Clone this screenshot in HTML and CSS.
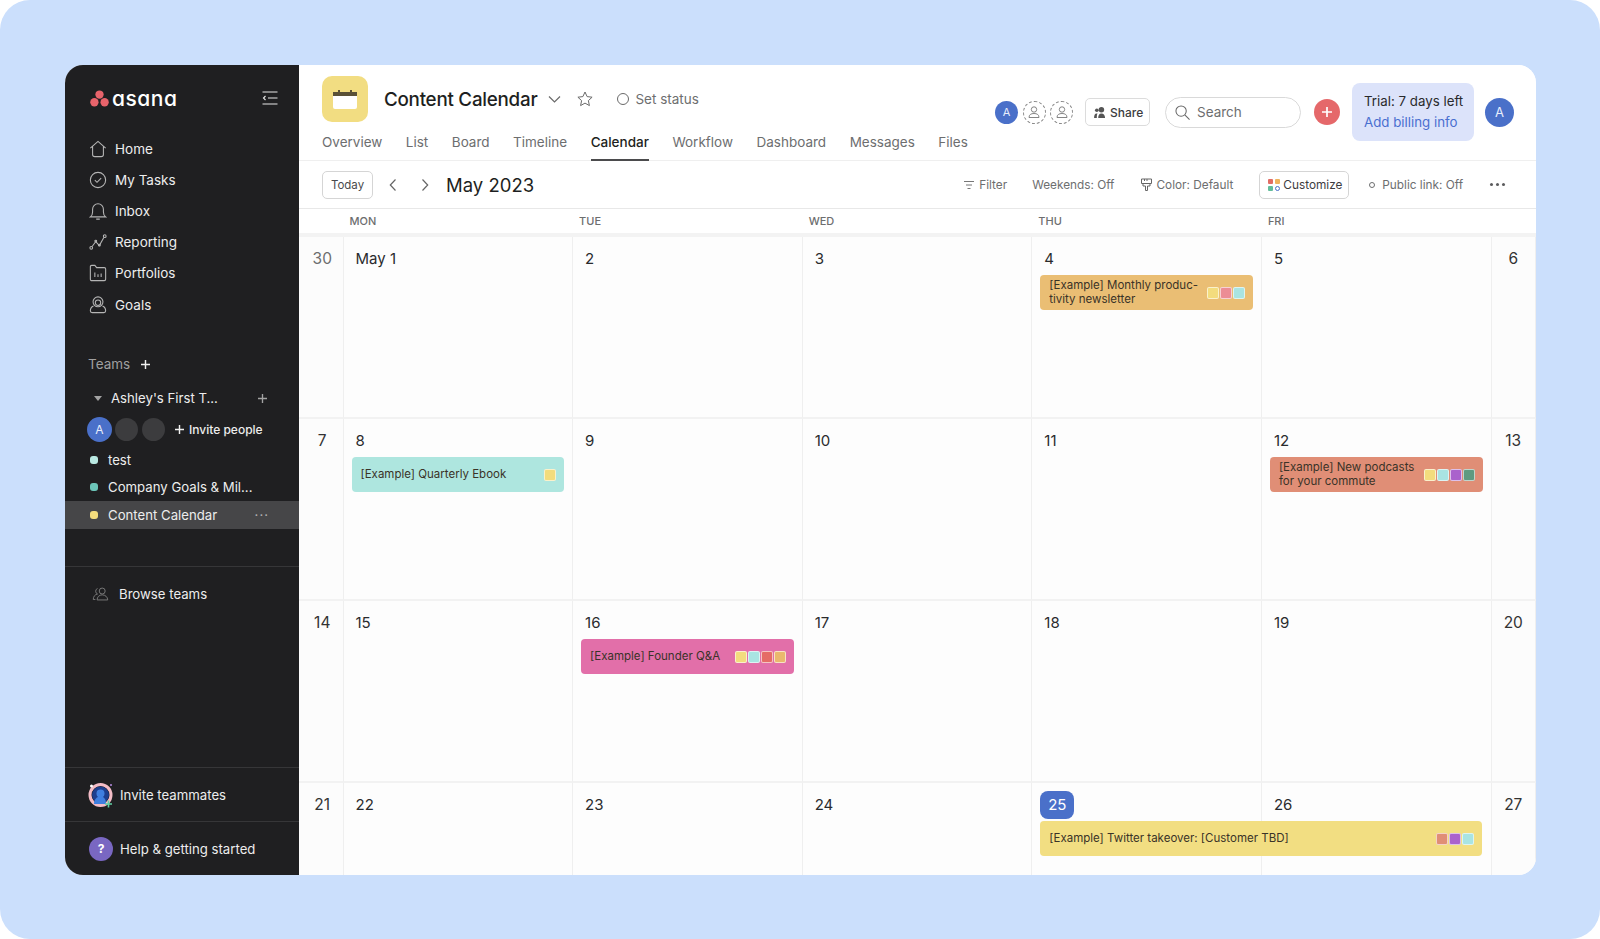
FILE: index.html
```html
<!DOCTYPE html>
<html lang="en">
<head>
    <meta charset="UTF-8">
    <meta name="viewport" content="width=device-width, initial-scale=1.0">
    <title>Content Calendar</title>
    <link rel="stylesheet" href="styles.css">
</head>
<body>
    <div class="backdrop">
        <div class="app">
            <aside class="sidebar">
                <div class="brand">
                    <div class="brand-name">
                        <svg class="brand-dots" viewBox="0 0 20 18"><circle cx="10" cy="4.800" r="4.400" fill="#e8636b"/><circle cx="4.600" cy="13" r="4.400" fill="#e8636b"/><circle cx="15.400" cy="13" r="4.400" fill="#e8636b"/></svg>
                        <span class="brand-text">asana</span>
                    </div>
                    <svg class="collapse" viewBox="0 0 16 14" fill="none" stroke="#e8e8e8" stroke-width="1.1"><path d="M0.5 1h15M6 7h9.5M0.5 13h15M3.5 5L1.5 7l2 2"/></svg>
                </div>

                <nav class="nav">
                    <a class="nav-item">
                        <svg class="nav-icon" viewBox="0 0 20 20" fill="none" stroke="#b5b5b5" stroke-width="1.2"><path d="M1.5 9L10 1.5 18.5 9M4 7v9a2.5 2.5 0 0 0 2.5 2.5h7A2.5 2.5 0 0 0 16 16V7"/></svg>
                        Home
                    </a>
                    <a class="nav-item">
                        <svg class="nav-icon" viewBox="0 0 20 20" fill="none" stroke="#b5b5b5" stroke-width="1.2"><circle cx="10" cy="10" r="8.5"/><path d="M6.5 10.2l2.4 2.4 4.6-4.8"/></svg>
                        My Tasks
                    </a>
                    <a class="nav-item">
                        <svg class="nav-icon" viewBox="0 0 20 20" fill="none" stroke="#b5b5b5" stroke-width="1.2"><path d="M1.5 16.5c2-1.500 2.500-3 2.500-5.500V8a6 6 0 0 1 12 0v3c0 2.500.5 4 2.500 5.500zM8 19h4"/></svg>
                        Inbox
                    </a>
                    <a class="nav-item">
                        <svg class="nav-icon" viewBox="0 0 20 20" fill="none" stroke="#b5b5b5" stroke-width="1.2"><circle cx="2.500" cy="16.500" r="1.500"/><circle cx="17.500" cy="3.500" r="1.500"/><path d="M3.500 15L7.500 9.500 11.500 14 16.500 5"/><circle cx="7.500" cy="9" r="1"/><circle cx="11.500" cy="13.500" r="1"/></svg>
                        Reporting
                    </a>
                    <a class="nav-item">
                        <svg class="nav-icon" viewBox="0 0 20 20" fill="none" stroke="#b5b5b5" stroke-width="1.2"><path d="M2.500 18.500a1.500 1.500 0 0 1-1-1.500V3a1.500 1.500 0 0 1 1.500-1.500h3.500l2 2.500H17a1.500 1.500 0 0 1 1.500 1.500V17a1.500 1.500 0 0 1-1.500 1.500z"/><path d="M6.500 14.500v-5M10 14.500v-3M13.500 14.500v-4"/></svg>
                        Portfolios
                    </a>
                    <a class="nav-item">
                        <svg class="nav-icon" viewBox="0 0 20 20" fill="none" stroke="#b5b5b5" stroke-width="1.2"><circle cx="10" cy="6.500" r="5.500"/><circle cx="10" cy="7.500" r="3"/><path d="M5 11c-2.500 1-3.500 3-3.500 5.500 0 1.200.8 2 2 2h13c1.200 0 2-.8 2-2 0-2.500-1-4.500-3.500-5.500"/></svg>
                        Goals
                    </a>
                </nav>

                <div class="teams-head">
                    <span>Teams</span>
                    <svg class="plus-icon" viewBox="0 0 10 10" stroke="#f0f0f0" stroke-width="1.6"><path d="M5 0v10M0 5h10"/></svg>
                </div>
                <div class="team-row">
                    <span class="caret"></span>
                    <span class="team-name">Ashley's First T...</span>
                    <svg class="team-add" viewBox="0 0 10 10" stroke="#a3a3a3" stroke-width="1.5"><path d="M5 0v10M0 5h10"/></svg>
                </div>
                <div class="member-row">
                    <span class="avatar avatar-sm">A</span>
                    <span class="ghost"></span>
                    <span class="ghost ghost-last"></span>
                    <svg class="invite-plus" viewBox="0 0 10 10" stroke="#f0f0f0" stroke-width="1.6"><path d="M5 0v10M0 5h10"/></svg>
                    <span class="invite-label">Invite people</span>
                </div>
                <ul class="projects">
                    <li class="project"><span class="dot dot-mint"></span>test</li>
                    <li class="project"><span class="dot dot-teal"></span>Company Goals &amp; Mil...</li>
                    <li class="project active"><span class="dot dot-yellow"></span>Content Calendar<span class="more">···</span></li>
                </ul>

                <div class="browse">
                    <svg class="browse-icon" viewBox="0 0 20 16" fill="none" stroke="#7c7c7c" stroke-width="1.1"><circle cx="12" cy="4.500" r="3.500"/><path d="M6 15c0-3.500 2.500-6 6-6s6.500 2.500 6.500 6zM6.500 1.500a3.500 3.500 0 0 0 0 6.500C3.500 8.500 1.500 11 1.500 14.500H4"/></svg>
                    Browse teams
                </div>

                <div class="sidebar-foot">
                    <div class="foot-row">
                        <svg class="foot-icon" viewBox="0 0 26 26"><circle cx="12.500" cy="13" r="10.500" fill="none" stroke="#f3bcc6" stroke-width="3"/><circle cx="12.500" cy="13" r="8.500" fill="#1d3f8f"/><path d="M6 22c0-5 3-7.500 6.500-7.500S18 17 18 22z" fill="#3f7fe0"/><circle cx="12.500" cy="11.500" r="4" fill="#3f7fe0"/><circle cx="3.500" cy="4" r="1.500" fill="#fff"/><circle cx="23" cy="3" r="1" fill="#b58be0"/><path d="M20.500 18.500v7M17 22h7" stroke="#5fd0a4" stroke-width="1.600"/></svg>
                        Invite teammates
                    </div>
                    <div class="foot-row">
                        <span class="help-badge">?</span>
                        Help &amp; getting started
                    </div>
                </div>
            </aside>

            <main class="main">
                <header class="header">
                    <div class="project-icon">
                        <svg viewBox="0 0 24 20" width="24" height="20"><rect x="0" y="3" width="24" height="17" rx="2" fill="#fff"/><rect x="0" y="3" width="24" height="4" fill="#5a5137"/><rect x="5" y="1" width="2" height="4" fill="#5a5137"/><rect x="17" y="1" width="2" height="4" fill="#5a5137"/></svg>
                    </div>
                    <div class="header-left">
                        <div class="title-row">
                            <h1 class="title">Content Calendar</h1>
                            <svg class="title-caret" viewBox="0 0 12 7" fill="none" stroke="#6a6a6a" stroke-width="1.2"><path d="M0.500 0.500L6 6l5.500-5.500"/></svg>
                            <svg class="star" viewBox="0 0 16 16" fill="none" stroke="#6a6a6a" stroke-width="1"><path d="M8 1l2.100 4.600 5 .6-3.700 3.400 1 5L8 12.100 3.600 14.600l1-5L.9 6.200l5-.6z"/></svg>
                            <span class="status-ring"></span>
                            <span class="status">Set status</span>
                        </div>
                        <nav class="tabs">
                            <a class="tab">Overview</a>
                            <a class="tab">List</a>
                            <a class="tab">Board</a>
                            <a class="tab">Timeline</a>
                            <a class="tab tab-active">Calendar</a>
                            <a class="tab">Workflow</a>
                            <a class="tab">Dashboard</a>
                            <a class="tab">Messages</a>
                            <a class="tab">Files</a>
                        </nav>
                    </div>
                    <div class="header-right">
                        <div class="members">
                            <span class="avatar avatar-xs">A</span>
                            <span class="dashed">
                                <svg viewBox="0 0 12 12" fill="none" stroke="#777" stroke-width=".9"><circle cx="6" cy="3.500" r="2.700"/><path d="M1 11.500c0-2.800 2-4 5-4s5 1.200 5 4z"/></svg>
                            </span>
                            <span class="dashed">
                                <svg viewBox="0 0 12 12" fill="none" stroke="#777" stroke-width=".9"><circle cx="6" cy="3.500" r="2.700"/><path d="M1 11.500c0-2.800 2-4 5-4s5 1.200 5 4z"/></svg>
                            </span>
                        </div>
                        <button class="share">
                            <svg viewBox="0 0 14 12" width="13" height="11" fill="#555"><circle cx="8" cy="3" r="3"/><circle cx="3" cy="3.500" r="2"/><path d="M4.500 12c0-3 1-5 3.500-5s4 2 4 5zM0 12c0-3 .6-5 3-5 .4 0 .5 0 .7.100C3 8.500 3 10 3 12z"/></svg>
                            Share
                        </button>
                        <div class="search">
                            <svg viewBox="0 0 16 16" width="15" height="15" fill="none" stroke="#666" stroke-width="1.100"><circle cx="6.500" cy="6.500" r="5.500"/><path d="M10.500 10.500l5 5"/></svg>
                            Search
                        </div>
                        <span class="add-btn"><svg viewBox="0 0 10 10" width="10" height="10" stroke="#fff" stroke-width="1.700"><path d="M5 0v10M0 5h10"/></svg></span>
                        <div class="trial">
                            <div class="trial-days">Trial: 7 days left</div>
                            <div class="trial-link">Add billing info</div>
                        </div>
                        <span class="avatar avatar-lg">A</span>
                    </div>
                </header>

                <div class="toolbar">
                    <button class="btn-today">Today</button>
                    <svg class="arrow arrow-prev" viewBox="0 0 7 12" fill="none" stroke="#666" stroke-width="1.200"><path d="M6 .5L.8 6 6 11.500"/></svg>
                    <svg class="arrow arrow-next" viewBox="0 0 7 12" fill="none" stroke="#666" stroke-width="1.200"><path d="M1 .5L6.200 6 1 11.500"/></svg>
                    <span class="month">May 2023</span>
                    <div class="tools">
                        <span class="tool tool-filter">
                            <svg viewBox="0 0 10 8" width="10" height="8" stroke="#777" fill="none"><path d="M0 .5h10M2 4h6M3.500 7.500h3"/></svg>
                            Filter
                        </span>
                        <span class="tool tool-weekends">Weekends: Off</span>
                        <span class="tool tool-color">
                            <svg viewBox="0 0 11 13" width="11" height="13" stroke="#666" fill="none"><path d="M.5 1h10v4.500H.5zM2 5.500v2.500h2.500v4.500h2V8H9V5.500M3.500 1v2M6 1v2"/></svg>
                            Color: Default
                        </span>
                        <button class="customize">
                            <span class="swatches"><i class="sw sw-red"></i><i class="sw sw-orange"></i><i class="sw sw-green"></i><i class="sw sw-blue"></i></span>
                            Customize
                        </button>
                        <span class="tool tool-link"><span class="link-ring"></span>Public link: Off</span>
                        <span class="tool-more"><i></i><i></i><i></i></span>
                    </div>
                </div>

                <div class="weekdays">
                    <span></span>
                    <span class="weekday">MON</span>
                    <span class="weekday">TUE</span>
                    <span class="weekday">WED</span>
                    <span class="weekday">THU</span>
                    <span class="weekday">FRI</span>
                    <span></span>
                </div>

                <div class="calendar">
                    <div class="cell side sunday"><span class="date past">30</span></div>
                    <div class="cell"><span class="date">May 1</span></div>
                    <div class="cell"><span class="date">2</span></div>
                    <div class="cell"><span class="date">3</span></div>
                    <div class="cell">
                        <span class="date">4</span>
                        <div class="event event-orange">
                            <span class="event-text">[Example] Monthly produc-<br>tivity newsletter</span>
                            <span class="chips"><i class="chip c-yellow"></i><i class="chip c-rose"></i><i class="chip c-aqua"></i></span>
                        </div>
                    </div>
                    <div class="cell"><span class="date">5</span></div>
                    <div class="cell side"><span class="date">6</span></div>

                    <div class="cell side sunday"><span class="date">7</span></div>
                    <div class="cell">
                        <span class="date">8</span>
                        <div class="event event-teal">
                            <span class="event-text">[Example] Quarterly Ebook</span>
                            <span class="chips"><i class="chip c-yellow"></i></span>
                        </div>
                    </div>
                    <div class="cell"><span class="date">9</span></div>
                    <div class="cell"><span class="date">10</span></div>
                    <div class="cell"><span class="date">11</span></div>
                    <div class="cell">
                        <span class="date">12</span>
                        <div class="event event-salmon">
                            <span class="event-text">[Example] New podcasts<br>for your commute</span>
                            <span class="chips"><i class="chip c-yellow"></i><i class="chip c-aqua"></i><i class="chip c-purple"></i><i class="chip c-green"></i></span>
                        </div>
                    </div>
                    <div class="cell side"><span class="date">13</span></div>

                    <div class="cell side sunday"><span class="date">14</span></div>
                    <div class="cell"><span class="date">15</span></div>
                    <div class="cell">
                        <span class="date">16</span>
                        <div class="event event-pink">
                            <span class="event-text">[Example] Founder Q&amp;A</span>
                            <span class="chips"><i class="chip c-yellow"></i><i class="chip c-aqua"></i><i class="chip c-red"></i><i class="chip c-amber"></i></span>
                        </div>
                    </div>
                    <div class="cell"><span class="date">17</span></div>
                    <div class="cell"><span class="date">18</span></div>
                    <div class="cell"><span class="date">19</span></div>
                    <div class="cell side"><span class="date">20</span></div>

                    <div class="cell side sunday"><span class="date">21</span></div>
                    <div class="cell"><span class="date">22</span></div>
                    <div class="cell"><span class="date">23</span></div>
                    <div class="cell"><span class="date">24</span></div>
                    <div class="cell cell-span">
                        <span class="date today">25</span>
                        <div class="event event-yellow event-wide">
                            <span class="event-text">[Example] Twitter takeover: [Customer TBD]</span>
                            <span class="chips"><i class="chip c-salmon"></i><i class="chip c-purple"></i><i class="chip c-aqua"></i></span>
                        </div>
                    </div>
                    <div class="cell"><span class="date">26</span></div>
                    <div class="cell side"><span class="date">27</span></div>
                </div>
            </main>
        </div>
    </div>
</body>
</html>
```

FILE: styles.css
```css
* {
    box-sizing: border-box;
}
html, body {
    height: 100%;
}
body {
    margin: 0;
    background: #fff;
    font-family: Inter, 'Liberation Sans', sans-serif;
    overflow: hidden;
}
button {
    font-family: inherit;
    cursor: pointer;
}
i {
    display: block;
}
.backdrop {
    height: 939px;
    padding: 65px 64px 64px 65px;
    background: #cbdffc;
    border-radius: 30px;
}
.app {
    display: flex;
    height: 810px;
    border-radius: 18px;
    overflow: hidden;
    background: #fdfdfd;
}

/* sidebar */
.sidebar {
    display: flex;
    flex-direction: column;
    flex: 0 0 234px;
    background: #1f1f21;
    color: #ededed;
    font-size: 13.5px;
}
.brand {
    display: flex;
    align-items: center;
    justify-content: space-between;
    height: 34px;
    margin-top: 16px;
    padding: 0 21px 0 25px;
}
.brand-name {
    display: flex;
    align-items: center;
    gap: 3px;
}
.brand-dots {
    width: 19px;
    height: 17px;
}
.brand-text {
    font-size: 21px;
    font-weight: 500;
    color: #fff;
    font-feature-settings: 'cv11';
    letter-spacing: .5px;
}
.collapse {
    width: 16px;
    height: 14px;
}
.nav {
    display: flex;
    flex-direction: column;
    margin-top: 18px;
}
.nav-item {
    display: flex;
    align-items: center;
    gap: 8px;
    height: 31.2px;
    padding-left: 24px;
}
.nav-icon {
    width: 18px;
    height: 18px;
}
.teams-head {
    display: flex;
    align-items: center;
    gap: 11px;
    margin-top: 32px;
    height: 24px;
    padding-left: 23px;
    color: #a0a0a0;
}
.plus-icon {
    width: 9px;
    height: 9px;
}
.team-row {
    display: flex;
    align-items: center;
    height: 28px;
    margin-top: 8px;
    padding-left: 29px;
    font-size: 13.2px;
}
.caret {
    width: 0;
    height: 0;
    border-left: 4.5px solid transparent;
    border-right: 4.5px solid transparent;
    border-top: 5px solid #a3a3a3;
}
.team-name {
    margin-left: 9px;
    flex: 1;
}
.team-add {
    width: 9px;
    height: 9px;
    margin-right: 32px;
}
.avatar {
    display: flex;
    align-items: center;
    justify-content: center;
    border-radius: 50%;
    background: #4a70c9;
    color: #e8eefc;
    flex: none;
}
.member-row {
    display: flex;
    align-items: center;
    height: 33px;
    margin-top: 1px;
    padding-left: 22px;
}
.avatar-sm {
    width: 25px;
    height: 25px;
    font-size: 12px;
}
.ghost {
    width: 23px;
    height: 23px;
    margin-left: 3px;
    border-radius: 50%;
    background: #3c3c3e;
}
.ghost-last {
    margin-left: 4px;
}
.invite-plus {
    width: 9px;
    height: 9px;
    margin-left: 10px;
}
.invite-label {
    margin-left: 5px;
    font-size: 12px;
    font-weight: 500;
}
.projects {
    list-style: none;
    margin: 0;
    padding: 0;
}
.project {
    display: flex;
    align-items: center;
    height: 27.5px;
    padding-left: 25px;
    font-size: 13.2px;
}
.project.active {
    background: #464648;
}
.dot {
    width: 8px;
    height: 8px;
    margin-right: 10px;
    border-radius: 3px;
}
.dot-mint {
    background: #b9e9e2;
}
.dot-teal {
    background: #6cc5b9;
}
.dot-yellow {
    background: #f3dc7d;
}
.more {
    margin-left: auto;
    margin-right: 30px;
    color: #b0b0b0;
    letter-spacing: 1px;
}
.browse {
    display: flex;
    align-items: center;
    gap: 10px;
    margin-top: 37px;
    height: 56px;
    padding-left: 27px;
    border-top: 1px solid #363638;
    font-size: 13.2px;
}
.browse-icon {
    width: 17px;
    height: 14px;
}
.sidebar-foot {
    margin-top: auto;
}
.foot-row {
    display: flex;
    align-items: center;
    gap: 6px;
    height: 54px;
    padding-left: 23px;
    border-top: 1px solid #363638;
    font-size: 13.2px;
}
.foot-icon {
    width: 26px;
    height: 26px;
}
.help-badge {
    display: flex;
    align-items: center;
    justify-content: center;
    width: 24px;
    height: 24px;
    margin: 0 1px;
    border-radius: 50%;
    background: #7967c2;
    color: #fff;
    font-size: 12px;
    font-weight: 700;
}

/* header */
.main {
    flex: 1;
    display: flex;
    flex-direction: column;
    min-width: 0;
}
.header {
    position: relative;
    display: flex;
    height: 96px;
    padding: 11px 22px 0 23px;
    background: #fff;
    border-bottom: 1px solid #efefef;
}
.project-icon {
    display: flex;
    align-items: center;
    justify-content: center;
    flex: none;
    width: 46px;
    height: 46px;
    border-radius: 10px;
    background: #f2dd82;
}
.header-left {
    margin-left: -46px;
    flex: none;
}
.title-row {
    display: flex;
    align-items: center;
    height: 46px;
    padding-left: 62px;
}
.title {
    margin: 0;
    font-size: 18.8px;
    font-weight: 500;
    color: #1e1f21;
    letter-spacing: -.25px;
}
.title-caret {
    width: 13px;
    height: 7px;
    margin-left: 11px;
}
.star {
    width: 16px;
    height: 16px;
    margin-left: 16px;
}
.status-ring {
    width: 12px;
    height: 12px;
    margin-left: 24px;
    border: 1px solid #6a6a6a;
    border-radius: 50%;
}
.status {
    margin-left: 6px;
    font-size: 13.5px;
    color: #6d6e6f;
}
.tabs {
    display: flex;
    gap: 23.5px;
    margin-top: 6px;
}
.tab {
    height: 33px;
    padding-top: 6px;
    font-size: 13.5px;
    color: #6d6e6f;
}
.tab-active {
    color: #1e1f21;
    font-weight: 500;
    border-bottom: 2px solid #4b4b4d;
}
.header-right {
    display: flex;
    align-items: center;
    margin-left: auto;
    height: 58px;
    margin-top: 7px;
}
.members {
    display: flex;
    gap: 4.5px;
}
.avatar-xs {
    width: 23px;
    height: 23px;
    font-size: 11px;
}
.dashed {
    display: flex;
    align-items: center;
    justify-content: center;
    width: 23px;
    height: 23px;
    border: 1px dashed #8a8a8a;
    border-radius: 50%;
}
.dashed svg {
    width: 12px;
    height: 12px;
}
.share {
    display: flex;
    align-items: center;
    gap: 3px;
    width: 65px;
    height: 28px;
    margin-left: 12px;
    padding: 0 0 0 8px;
    background: #fff;
    border: 1px solid #dcdcdc;
    border-radius: 5px;
    font-size: 12px;
    font-weight: 500;
    color: #3c3c3e;
}
.search {
    display: flex;
    align-items: center;
    gap: 7px;
    width: 136px;
    height: 31px;
    margin-left: 15px;
    padding-left: 9px;
    border: 1px solid #d9d9d9;
    border-radius: 16px;
    font-size: 13.5px;
    color: #6d6e6f;
}
.add-btn {
    display: flex;
    align-items: center;
    justify-content: center;
    width: 26px;
    height: 26px;
    margin-left: 13px;
    border-radius: 50%;
    background: #e5686a;
}
.trial {
    width: 122px;
    height: 58px;
    margin-left: 12px;
    padding: 8px 0 0 12px;
    background: #dce3fa;
    border-radius: 8px;
    font-size: 13.3px;
    line-height: 21px;
}
.trial-days {
    color: #2a2a2c;
}
.trial-link {
    color: #4a6fd0;
}
.avatar-lg {
    width: 29px;
    height: 29px;
    margin-left: 11px;
    font-size: 13px;
}

/* toolbar */
.toolbar {
    display: flex;
    align-items: center;
    flex: none;
    height: 48px;
    padding: 0 31px 0 23px;
    background: #fff;
    border-bottom: 1px solid #e8e8e8;
}
.btn-today {
    width: 51px;
    height: 28px;
    padding: 0;
    background: #fff;
    border: 1px solid #d5d5d5;
    border-radius: 5px;
    font-size: 11.5px;
    color: #4a4a4c;
}
.arrow {
    width: 8px;
    height: 12px;
}
.arrow-prev {
    margin-left: 16px;
}
.arrow-next {
    margin-left: 24px;
}
.month {
    margin-left: 17px;
    font-size: 18.5px;
    color: #1e1f21;
}
.tools {
    display: flex;
    align-items: center;
    margin-left: auto;
}
.tool {
    display: flex;
    align-items: center;
    gap: 4px;
    font-size: 11.8px;
    color: #6d6e6f;
}
.tool-filter {
    gap: 5px;
}
.tool-weekends {
    margin-left: 25px;
}
.tool-color {
    margin-left: 27px;
}
.customize {
    display: flex;
    align-items: center;
    gap: 3px;
    width: 90px;
    height: 28px;
    margin-left: 26px;
    padding: 0 0 0 8px;
    background: #fff;
    border: 1px solid #d5d5d5;
    border-radius: 5px;
    font-size: 11.8px;
    color: #3c3c3e;
}
.swatches {
    display: grid;
    grid-template-columns: 5px 5px;
    gap: 2px;
}
.sw {
    width: 5px;
    height: 5px;
    border-radius: 1px;
}
.sw-red {
    background: #e26d64;
}
.sw-orange {
    background: #efb45e;
}
.sw-green {
    background: #62bd9b;
}
.sw-blue {
    background: #fff;
    border: 1px solid #4a70c9;
    border-radius: 50%;
}
.tool-link {
    margin-left: 20px;
    gap: 7px;
}
.link-ring {
    width: 6px;
    height: 6px;
    border: 1px solid #6d6e6f;
    border-radius: 50%;
}
.tool-more {
    display: flex;
    gap: 3px;
    margin-left: 27px;
}
.tool-more i {
    width: 3px;
    height: 3px;
    border-radius: 50%;
    background: #5b5b5d;
}

/* calendar */
.weekdays {
    display: grid;
    grid-template-columns: 44.5px repeat(5, 1fr) 44.5px;
    flex: none;
    height: 28px;
    background: #fff;
    border-bottom: 4px solid #f3f3f3;
    align-items: center;
}
.weekday {
    padding-left: 6px;
    font-size: 11px;
    font-weight: 500;
    color: #6d6e6f;
}
.calendar {
    display: grid;
    grid-template-columns: 44.5px repeat(5, 1fr) 44.5px;
    grid-template-rows: repeat(4, 182px);
    flex: 1;
    min-height: 0;
    overflow: hidden;
}
.cell {
    padding: 12px 8px 0;
    border-right: 1px solid #efefef;
    border-bottom: 2px solid #f2f2f2;
    background: #fdfdfd;
}
.cell.side {
    padding: 12px 0 0;
    text-align: center;
    background: #fcfcfc;
}
.cell.sunday {
    padding-left: 3px;
}
/* the Twitter event runs on into the next day, so its cell stays on top */
.cell-span {
    position: relative;
    z-index: 1;
}
.date {
    display: block;
    height: 20px;
    padding-left: 4px;
    font-size: 15px;
    line-height: 20px;
    color: #2a2b2d;
}
.side .date {
    padding-left: 0;
    font-size: 15.5px;
    color: #333;
}
.side .past {
    color: #6d6e6f;
}
.today {
    width: 34px;
    height: 28px;
    margin-top: -4px;
    margin-bottom: -4px;
    padding: 0;
    background: #4a70c9;
    border-radius: 8px;
    color: #fff;
    line-height: 28px;
    text-align: center;
}
.event {
    display: flex;
    align-items: center;
    justify-content: space-between;
    height: 35px;
    margin-top: 6px;
    padding: 0 8px 0 9px;
    border-radius: 4px;
    font-size: 11.5px;
    line-height: 13.5px;
    color: #3a3328;
}
.event-wide {
    width: calc(200% + 17px);
}
.event-orange {
    background: #eabe74;
}
.event-teal {
    background: #aee6df;
}
.event-salmon {
    background: #e08e76;
}
.event-pink {
    background: #e26fa9;
}
.event-yellow {
    background: #f2de82;
}
.chips {
    display: flex;
    gap: 1px;
    flex: none;
}
.chip {
    width: 12px;
    height: 12px;
    border: 1px solid rgba(255,255,255,.6);
    border-radius: 2px;
}
.c-yellow {
    background: #f3dc7d;
}
.c-rose {
    background: #ec8d95;
}
.c-aqua {
    background: #a9e4e2;
}
.c-purple {
    background: #aa62cc;
}
.c-green {
    background: #5f9a80;
}
.c-red {
    background: #e56c66;
}
.c-amber {
    background: #eab86d;
}
.c-salmon {
    background: #e08e76;
}
```
